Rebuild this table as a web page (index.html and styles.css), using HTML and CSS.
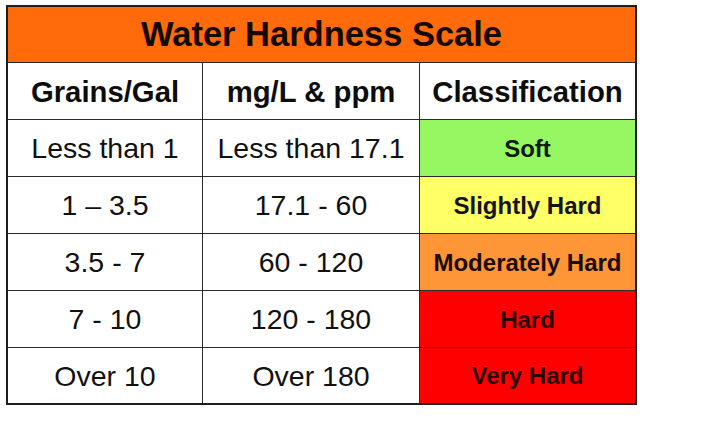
FILE: index.html
```html
<!DOCTYPE html>
<html lang="en">
<head>
<meta charset="utf-8">
<title>Water Hardness Scale</title>
<link rel="stylesheet" href="styles.css">
</head>
<body>
<div class="scale">
  <div class="grid">
    <div class="cell title">Water Hardness Scale</div>
    <div class="cell head">Grains/Gal</div>
    <div class="cell head">mg/L &amp; ppm</div>
    <div class="cell head">Classification</div>

    <div class="cell">Less than 1</div>
    <div class="cell">Less than 17.1</div>
    <div class="cell cls soft">Soft</div>

    <div class="cell">1 – 3.5</div>
    <div class="cell">17.1 - 60</div>
    <div class="cell cls slight">Slightly Hard</div>

    <div class="cell">3.5 - 7</div>
    <div class="cell">60 - 120</div>
    <div class="cell cls moderate">Moderately Hard</div>

    <div class="cell">7 - 10</div>
    <div class="cell">120 - 180</div>
    <div class="cell cls hard">Hard</div>

    <div class="cell">Over 10</div>
    <div class="cell">Over 180</div>
    <div class="cell cls hard">Very Hard</div>
  </div>
</div>
</body>
</html>
```

FILE: styles.css
```css
html, body {
  margin: 0;
  background: #ffffff;
}

body {
  padding: 5px 0 0 6px;
  font-family: "Liberation Sans", Arial, sans-serif;
  color: #111111;
}

.scale {
  display: inline-block;
  border: 2px solid #1e1e1e;
  background: #2a2a2a;
}

.grid {
  display: grid;
  grid-template-columns: 194px 216px 215px;
  grid-template-rows: 55px repeat(5, 56px) 55px;
  gap: 1px;
}

.cell {
  background: #ffffff;
  display: flex;
  align-items: center;
  justify-content: center;
  font-size: 28.5px;
  white-space: nowrap;
  padding-top: 1px;
  box-sizing: border-box;
}

.title {
  grid-column: 1 / -1;
  background: #ff6a0a;
  font-weight: bold;
  font-size: 34.5px;
  color: #140800;
  padding-top: 0;
}

.head {
  font-weight: bold;
  font-size: 29.3px;
  color: #0d0d0d;
}

.cls {
  font-weight: bold;
  font-size: 24px;
  color: #141414;
}

.soft { background: #96f763; color: #0f1a08; }
.slight { background: #ffff66; }
.moderate { background: #fe9537; color: #1a0c02; }
.hard { background: #fe0000; color: #2a0000; }
```
